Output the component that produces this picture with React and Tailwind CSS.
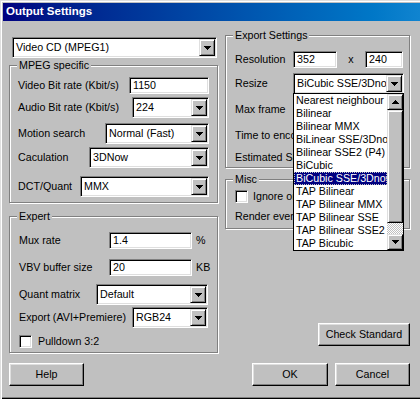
import React from 'react'

const sunken =
  'border border-t-[#808080] border-l-[#808080] border-r-white border-b-white shadow-[inset_1px_1px_0_#000,inset_-1px_-1px_0_#dfdfdf]'
const raised =
  'bg-[#c0c0c0] border border-t-[#dfdfdf] border-l-[#dfdfdf] border-r-black border-b-black shadow-[inset_1px_1px_0_#fff,inset_-1px_-1px_0_#808080]'

const resizeModes = [
  'Nearest neighbour',
  'Bilinear',
  'Bilinear MMX',
  'BiLinear SSE/3Dnow',
  'Bilinear SSE2 (P4)',
  'BiCubic',
  'BiCubic SSE/3Dnow',
  'TAP Bilinear',
  'TAP Bilinear MMX',
  'TAP Bilinear SSE',
  'TAP Bilinear SSE2',
  'TAP Bicubic',
]

function Arrow({ up }) {
  return (
    <svg width="7" height="4" viewBox="0 0 7 4" shapeRendering="crispEdges" className={up ? 'rotate-180' : ''}>
      <rect x="0" y="0" width="7" height="1" />
      <rect x="1" y="1" width="5" height="1" />
      <rect x="2" y="2" width="3" height="1" />
      <rect x="3" y="3" width="1" height="1" />
    </svg>
  )
}

function Combo({ value, className }) {
  return (
    <div className={`flex h-[21px] bg-white p-[1px] ${sunken} ${className}`}>
      <div className="flex-1 overflow-hidden whitespace-nowrap pl-[2px] leading-[17px]">{value}</div>
      <div className={`flex w-[16px] items-center justify-center ${raised}`}>
        <Arrow />
      </div>
    </div>
  )
}

function Edit({ value, className }) {
  return (
    <div className={`h-[17px] bg-white pl-[3px] leading-[15px] ${sunken} ${className}`}>{value}</div>
  )
}

function Check() {
  return <div className={`h-[13px] w-[13px] shrink-0 bg-white ${sunken}`} />
}

function Group({ label, className, children }) {
  return (
    <div className={`relative flex flex-col border border-[#808080] shadow-[inset_1px_1px_0_#fff,1px_1px_0_#fff] ${className}`}>
      <span className="absolute -top-[8px] left-[7px] bg-[#c0c0c0] px-[2px] leading-[14px]">{label}</span>
      {children}
    </div>
  )
}

function Button({ children, className }) {
  return (
    <div
      className={`flex h-[23px] items-center justify-center bg-[#c0c0c0] border border-t-white border-l-white border-r-black border-b-black shadow-[inset_-1px_-1px_0_#808080,inset_1px_1px_0_#dfdfdf] ${className}`}
    >
      {children}
    </div>
  )
}

// open list of the Resize combo, drawn over the dialog
function DropList() {
  return (
    <div className="absolute left-[293px] top-[93px] z-10 flex h-[158px] w-[111px] border border-black bg-white">
      <div className="flex w-[93px] flex-col overflow-hidden">
        {resizeModes.map((m, i) => (
          <div
            key={m}
            className={`h-[13px] whitespace-nowrap pl-[2px] leading-[13px] ${
              i === 6 ? 'bg-[#000080] text-white outline-1 -outline-offset-1 outline-dotted outline-[#c0c0c0]' : ''
            }`}
          >
            {m}
          </div>
        ))}
      </div>
      <div className="flex w-[16px] flex-col">
        <div className={`flex h-[16px] items-center justify-center ${raised}`}>
          <Arrow up />
        </div>
        <div className={`h-[113px] ${raised}`} />
        <div className="flex-1 bg-[repeating-conic-gradient(#fff_0%_25%,#c0c0c0_0%_50%)] bg-size-[2px_2px]" />
        <div className={`flex h-[16px] items-center justify-center ${raised}`}>
          <Arrow />
        </div>
      </div>
    </div>
  )
}

export default function App() {
  return (
    <div className="relative flex h-[399px] w-[420px] flex-col bg-[#c0c0c0] pl-[3px] pt-[3px] font-['Liberation_Sans',Arial,sans-serif] text-[10.7px] text-black shadow-[inset_1px_1px_0_#dfdfdf,inset_2px_2px_0_#fff,inset_0_-1px_0_#000,inset_0_-2px_0_#808080]">
      {/* title bar */}
      <div className="flex h-[18px] items-center bg-gradient-to-r from-[#000080] to-[#1084d0] pl-[3px] text-[11.5px] font-bold text-white">
        Output Settings
      </div>

      <div className="flex flex-col pl-[6px]">
        <div className="flex">
          {/* left column */}
          <div className="flex w-[209px] flex-col">
            <Combo value="Video CD (MPEG1)" className="ml-[3px] mt-[16px] w-[205px]" />

            <Group label="MPEG specific" className="mt-[7px] h-[138px] pl-[8px]">
              <div className="mt-[11px] flex items-center">
                <span className="w-[111px]">Video Bit rate (Kbit/s)</span>
                <Edit value="1150" className="w-[80px]" />
              </div>
              <div className="mt-[3px] flex items-center">
                <span className="w-[114px]">Audio Bit rate (Kbit/s)</span>
                <Combo value="224" className="w-[77px]" />
              </div>
              <div className="mt-[5px] flex items-center">
                <span className="w-[87px]">Motion search</span>
                <Combo value="Normal (Fast)" className="w-[104px]" />
              </div>
              <div className="mt-[3px] flex items-center">
                <span className="w-[71px]">Caculation</span>
                <Combo value="3DNow" className="w-[120px]" />
              </div>
              <div className="mt-[8px] flex items-center">
                <span className="w-[62px]">DCT/Quant</span>
                <Combo value="MMX" className="w-[129px]" />
              </div>
            </Group>

            <Group label="Expert" className="mt-[13px] h-[137px] pl-[9px]">
              <div className="mt-[15px] flex items-center">
                <span className="w-[90px]">Mux rate</span>
                <Edit value="1.4" className="w-[83px]" />
                <span className="ml-[4px]">%</span>
              </div>
              <div className="mt-[10px] flex items-center">
                <span className="w-[90px]">VBV buffer size</span>
                <Edit value="20" className="w-[83px]" />
                <span className="ml-[4px]">KB</span>
              </div>
              <div className="mt-[8px] flex items-center">
                <span className="w-[77px]">Quant matrix</span>
                <Combo value="Default" className="w-[112px]" />
              </div>
              <div className="mt-[2px] flex items-center">
                <span className="w-[113px]">Export (AVI+Premiere)</span>
                <Combo value="RGB24" className="w-[76px]" />
              </div>
              <div className="mt-[5px] flex items-center">
                <Check />
                <span className="ml-[6px]">Pulldown 3:2</span>
              </div>
            </Group>
          </div>

          {/* right column */}
          <div className="ml-[7px] flex w-[185px] flex-col">
            <Group label="Export Settings" className="mt-[14px] h-[133px] pl-[9px]">
              <div className="mt-[15px] flex items-center">
                <span className="w-[58px]">Resolution</span>
                <Edit value="352" className="w-[44px]" />
                <span className="w-[28px] text-center">x</span>
                <Edit value="240" className="w-[38px]" />
              </div>
              <div className="mt-[5px] flex items-center">
                <span className="w-[58px]">Resize</span>
                <Combo value="BiCubic SSE/3Dnow" className="w-[111px]" />
              </div>
              {/* labels below run under the open list */}
              <div className="mt-[7px] flex h-[17px] w-[58px] items-center overflow-hidden whitespace-nowrap">Max frame</div>
              <div className="mt-[9px] flex h-[17px] w-[58px] items-center overflow-hidden whitespace-nowrap">Time to encode</div>
              <div className="mt-[5px] flex h-[17px] w-[58px] items-center overflow-hidden whitespace-nowrap">Estimated Size</div>
            </Group>

            <Group label="Misc" className="mt-[11px] h-[50px] pl-[9px]">
              <div className="mt-[8px] flex w-[58px] items-center overflow-hidden whitespace-nowrap">
                <Check />
                <span className="ml-[5px]">Ignore original</span>
              </div>
              <div className="mt-[5px] flex h-[14px] w-[58px] items-center overflow-hidden whitespace-nowrap">Render every frame</div>
            </Group>

            <Button className="mt-[94px] w-[92px] self-end">Check Standard</Button>
          </div>
        </div>

        {/* bottom buttons */}
        <div className="mt-[10px] flex">
          <Button className="w-[75px]">Help</Button>
          <Button className="ml-[168px] w-[76px]">OK</Button>
          <Button className="ml-[7px] w-[75px]">Cancel</Button>
        </div>
      </div>

      <DropList />
    </div>
  )
}
